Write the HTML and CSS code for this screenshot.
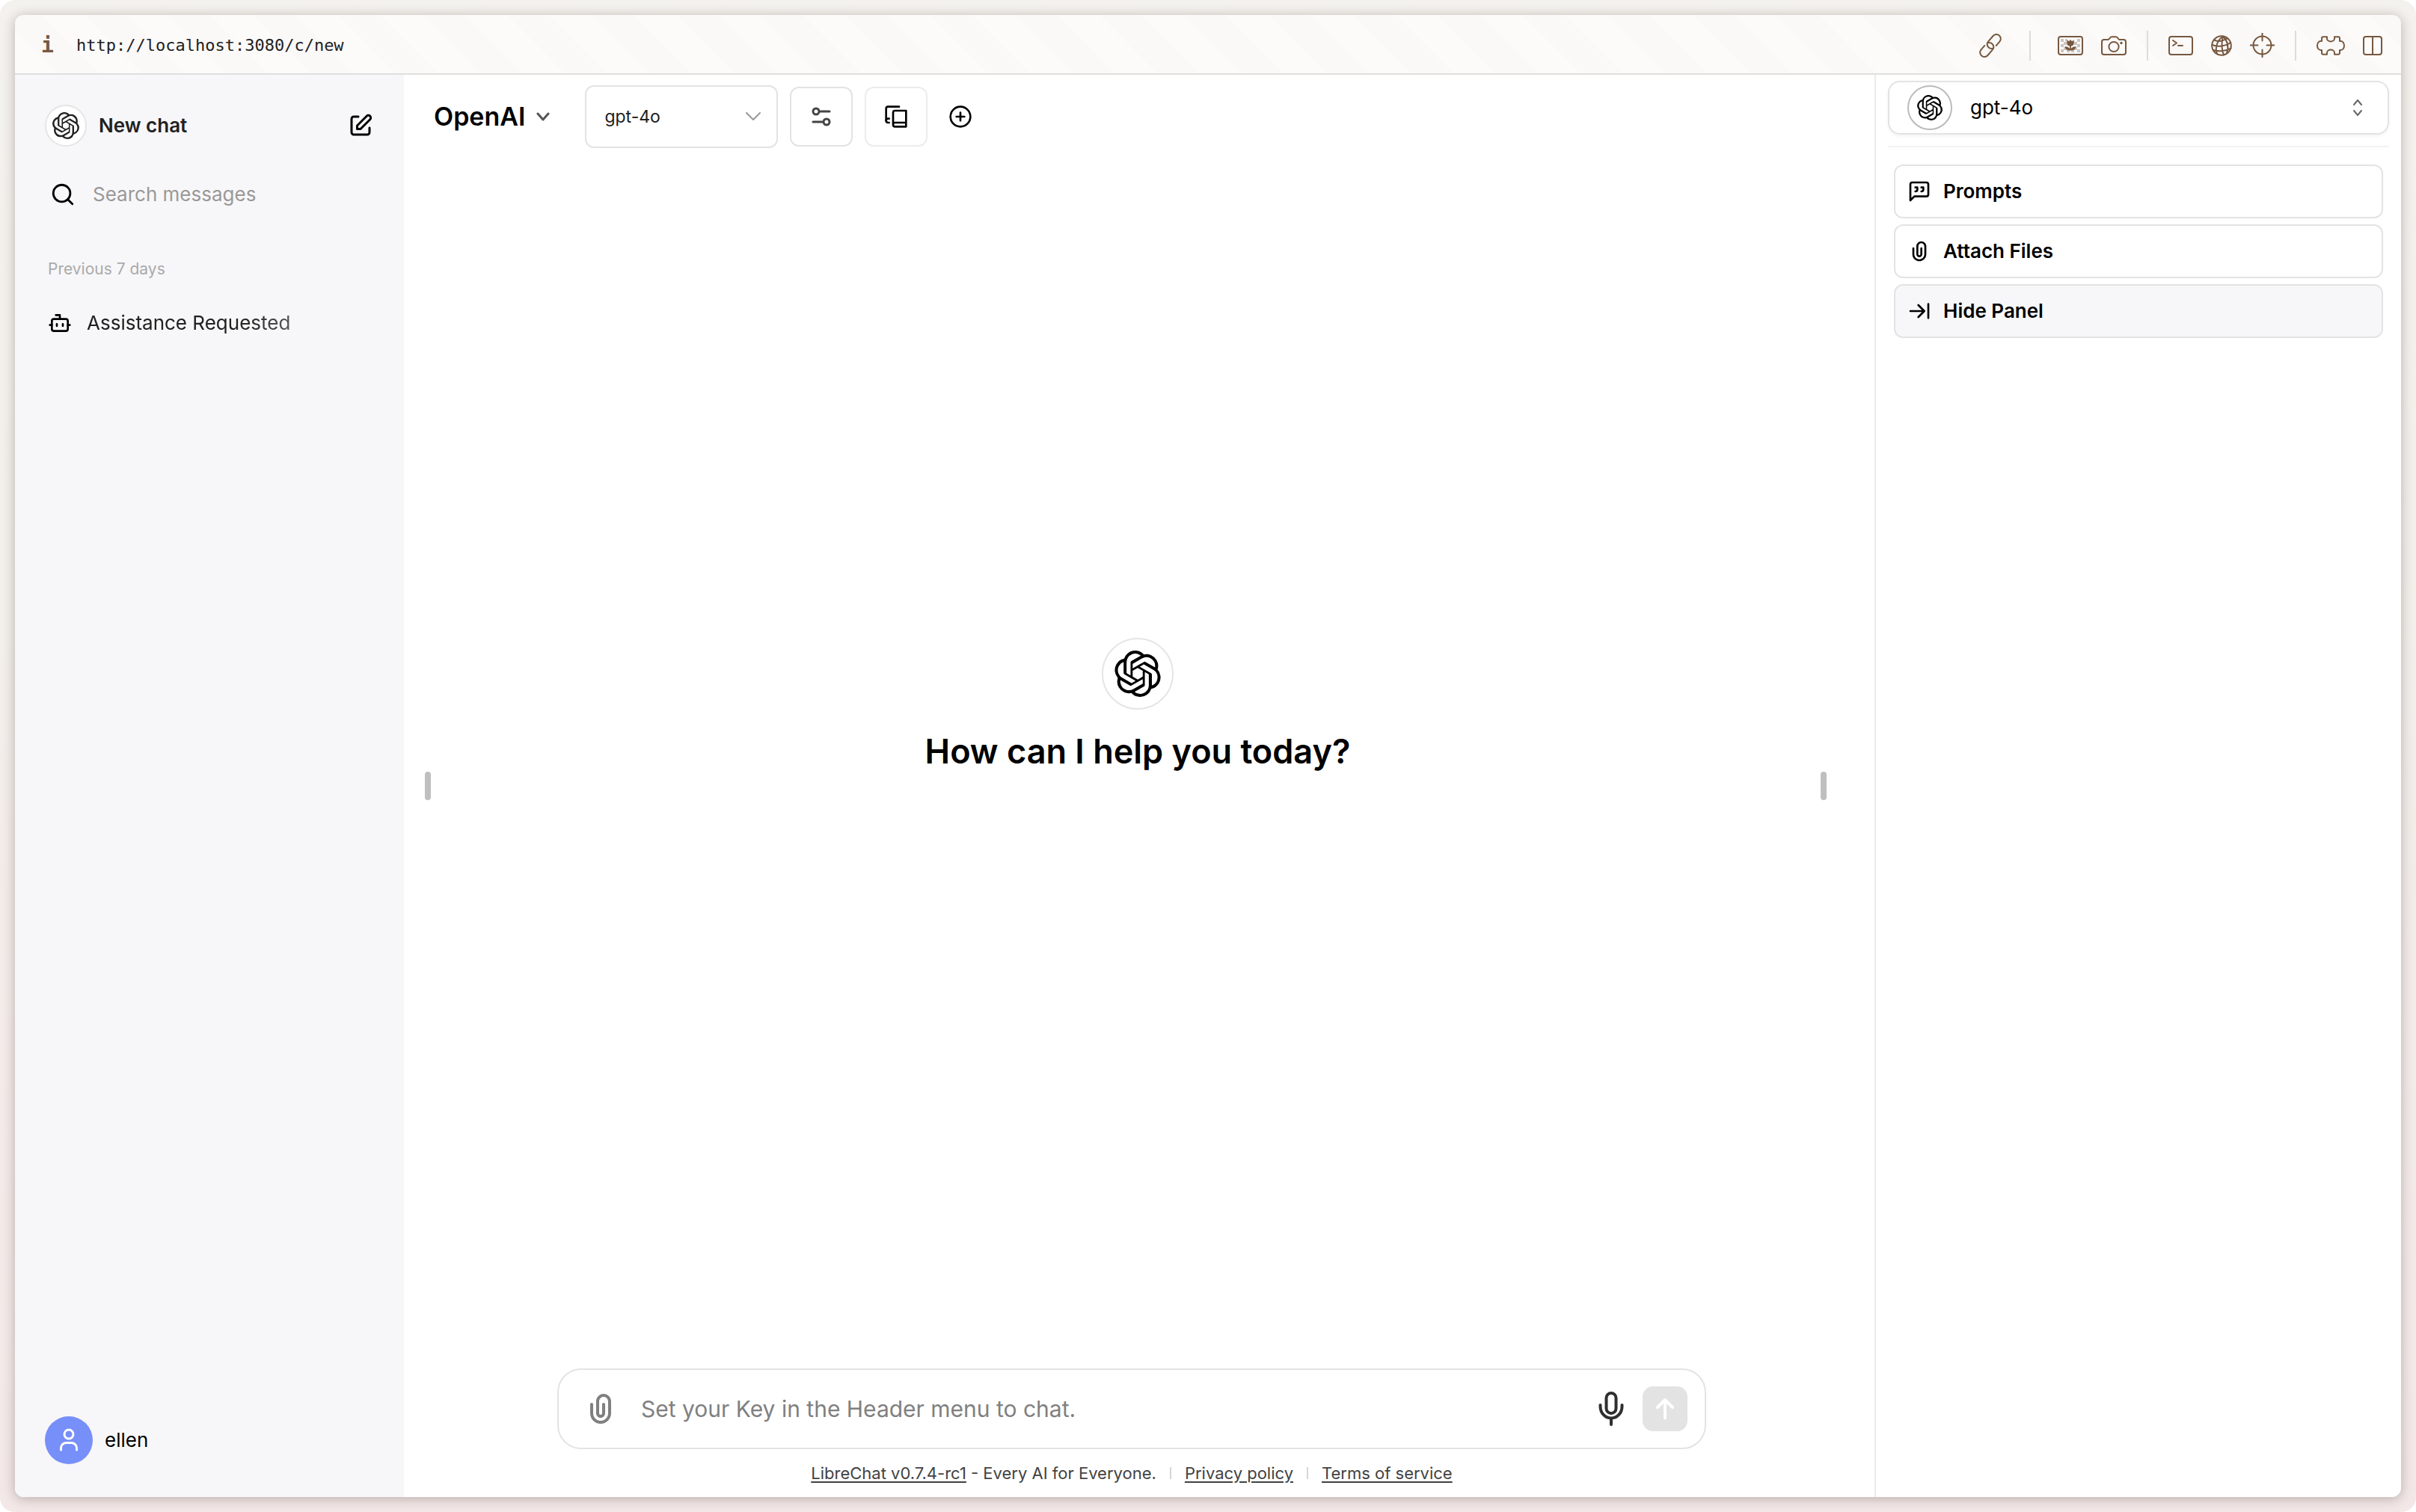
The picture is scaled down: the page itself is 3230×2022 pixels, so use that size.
FILE: index.html
```html
<!DOCTYPE html>
<html lang="en">
<head>
<meta charset="utf-8">
<title>LibreChat</title>
<link rel="stylesheet" href="styles.css">
</head>
<body>
<svg class="defs" width="0" height="0" aria-hidden="true">
  <symbol id="openai" viewBox="0 0 24 24"><path fill="currentColor" d="M22.2819 9.8211a5.9847 5.9847 0 0 0-.5157-4.9108 6.0462 6.0462 0 0 0-6.5098-2.9A6.0651 6.0651 0 0 0 4.9807 4.1818a5.9847 5.9847 0 0 0-3.9977 2.9 6.0462 6.0462 0 0 0 .7427 7.0966 5.98 5.98 0 0 0 .511 4.9107 6.051 6.051 0 0 0 6.5146 2.9001A5.9847 5.9847 0 0 0 13.2599 24a6.0557 6.0557 0 0 0 5.7718-4.2058 5.9894 5.9894 0 0 0 3.9977-2.9001 6.0557 6.0557 0 0 0-.7475-7.073zm-9.022 12.6081a4.4755 4.4755 0 0 1-2.8764-1.0408l.1419-.0804 4.7783-2.7582a.7948.7948 0 0 0 .3927-.6813v-6.7369l2.02 1.1686a.071.071 0 0 1 .038.052v5.5826a4.504 4.504 0 0 1-4.4945 4.4944zm-9.6607-4.1254a4.4708 4.4708 0 0 1-.5346-3.0137l.142.0852 4.783 2.7582a.7712.7712 0 0 0 .7806 0l5.8428-3.3685v2.3324a.0804.0804 0 0 1-.0332.0615L9.74 19.9502a4.4992 4.4992 0 0 1-6.1408-1.6464zM2.3408 7.8956a4.485 4.485 0 0 1 2.3655-1.9728V11.6a.7664.7664 0 0 0 .3879.6765l5.8144 3.3543-2.0201 1.1685a.0757.0757 0 0 1-.071 0l-4.8303-2.7865A4.504 4.504 0 0 1 2.3408 7.872zm16.5963 3.8558L13.1038 8.364 15.1192 7.2a.0757.0757 0 0 1 .071 0l4.8303 2.7913a4.4944 4.4944 0 0 1-.6765 8.1042v-5.6772a.79.79 0 0 0-.407-.667zm2.0107-3.0231l-.142-.0852-4.7735-2.7818a.7759.7759 0 0 0-.7854 0L9.409 9.2297V6.8974a.0662.0662 0 0 1 .0284-.0615l4.8303-2.7866a4.4992 4.4992 0 0 1 6.6802 4.66zM8.3065 12.863l-2.02-1.1638a.0804.0804 0 0 1-.038-.0567V6.0742a4.4992 4.4992 0 0 1 7.3757-3.4537l-.142.0805L8.704 5.459a.7948.7948 0 0 0-.3927.6813zm1.0976-2.3654l2.602-1.4998 2.6069 1.4998v2.9994l-2.5974 1.4997-2.6067-1.4997Z"/></symbol>
  <symbol id="clip" viewBox="0 0 24 24"><path fill="currentColor" fill-rule="evenodd" d="M9 7C9 4.23858 11.2386 2 14 2C16.7614 2 19 4.23858 19 7V15C19 18.866 15.866 22 12 22C8.13401 22 5 18.866 5 15V9C5 8.44772 5.44772 8 6 8C6.55228 8 7 8.44772 7 9V15C7 17.7614 9.23858 20 12 20C14.7614 20 17 17.7614 17 15V7C17 5.34315 15.6569 4 14 4C12.3431 4 11 5.34315 11 7V15C11 15.5523 11.4477 16 12 16C12.5523 16 13 15.5523 13 15V9C13 8.44772 13.4477 8 14 8C14.5523 8 15 8.44772 15 9V15C15 16.6569 13.6569 18 12 18C10.3431 18 9 16.6569 9 15V7Z"/></symbol>
</svg>

<div class="frame">
<div class="window">
  <header class="toolbar">
    <span class="info">i</span>
    <a class="url" href="http://localhost:3080/c/new">http://localhost:3080/c/new</a>
    <div class="tools">
      <button type="button" aria-label="Copy link"><svg class="line" width="32" height="32" viewBox="-16 -16 32 32"><g transform="rotate(-49)"><path d="M5 5.800H12.200A5.800 5.800 0 0 0 12.200-5.800H2.500A5.800 5.800 0 0 0-.5 5"/><path transform="rotate(180)" d="M5 5.800H12.200A5.800 5.800 0 0 0 12.200-5.800H2.500A5.800 5.800 0 0 0-.5 5"/></g></svg></button>
      <span class="rule rule-wide"></span>
      <button type="button" aria-label="Image"><svg class="line" width="34" height="26" viewBox="0 0 34 26"><g class="checks"><path d="M4 4h4v4H4zM8 8h4v4H8zM4 11h4v4H4zM8 15h4v4H8zM4 18h4v4H4zM10 4h3v3h-3zM26 4h4v4h-4zM22 8h4v4h-4zM26 11h4v4h-4zM22 15h4v4h-4zM26 18h4v4h-4zM12 19h4v3h-4zM18 19h4v3h-4z"/></g><rect x="1" y="1" width="32" height="24" rx="3"/><path class="solid" d="M12.3 5.5l2.7 1.8L17 5l2 2.3 2.7-1.8v4.3c0 2.3-1.6 3.8-3.8 4V17c1.300-1.900 3.600-3 6.600-2.800-.6 3.500-3.200 5.300-6.600 5.300h-1.800c-3.400 0-6-1.800-6.600-5.300 3-.2 5.300.9 6.600 2.800v-3.200c-2.200-.2-3.800-1.700-3.800-4z"/></svg></button>
      <button type="button" aria-label="Screenshot"><svg class="line" width="34" height="26" viewBox="0 0 34 26"><path d="M4 5h5.500c1.600 0 2-3.800 4.500-3.800h6C22.500 1.200 22.900 5 24.500 5H30a3 3 0 0 1 3 3v14a3 3 0 0 1-3 3H4a3 3 0 0 1-3-3V8a3 3 0 0 1 3-3z"/><circle cx="17" cy="14.500" r="6.600"/><circle class="solid" cx="27" cy="9.500" r="1.700"/></svg></button>
      <span class="rule"></span>
      <button type="button" aria-label="Console"><svg class="line" width="33" height="26" viewBox="0 0 33 26"><rect x="1" y="1" width="31" height="24" rx="3"/><path d="M6 6l5 3.500L6 13M13 13h6"/></svg></button>
      <button type="button" aria-label="Network"><svg class="line" width="28" height="28" viewBox="0 0 28 28"><circle cx="14" cy="14" r="12.800"/><path d="M16 1.500C8 7 5 17 8 25M16 1.500c-2 8-2.500 17 1 25M16 1.500c6 6 8 14 5 23M4 6.500c5 2.500 13 1.500 18-2.500M1.500 13c7 3 18 2 24.500-3M3 20c7 2 17 1.500 23.500-2.500"/></svg></button>
      <button type="button" aria-label="Inspect element"><svg class="line" width="33" height="33" viewBox="0 0 33 33"><circle cx="16.500" cy="16.500" r="12"/><path d="M16.500 0v10.500M16.500 22.500V33M0 16.500h10.500M22.500 16.500H33"/></svg></button>
      <span class="rule"></span>
      <button type="button" aria-label="Extensions"><svg class="line" width="38" height="26" viewBox="0 0 38 26"><path d="M9 1.200h5v2.300a5 4 0 0 0 10 0V1.200h5a2 2 0 0 1 2 2V7h1.500a4.500 6 0 0 1 0 12H31v3.800a2 2 0 0 1-2 2h-5v-2.300a5 4 0 0 0-10 0v2.300H9a2 2 0 0 1-2-2V19H5.500a4.500 6 0 0 1 0-12H7V3.200a2 2 0 0 1 2-2z"/></svg></button>
      <button type="button" aria-label="Split view"><svg class="line" width="26" height="26" viewBox="0 0 26 26"><rect x="1" y="1" width="24" height="24" rx="3"/><path d="M13 1v24"/></svg></button>
    </div>
  </header>

  <div class="app">
    <nav class="sidebar">
      <div class="newchat">
        <a href="#"><span class="ring"><svg width="36" height="36"><use href="#openai"/></svg></span>New chat</a>
        <button type="button" aria-label="New chat"><svg width="36" height="36" viewBox="0 0 24 24"><path fill="currentColor" fill-rule="evenodd" d="M16.7929 2.79289C18.0118 1.57394 19.9882 1.57394 21.2071 2.79289C22.4261 4.01184 22.4261 5.98815 21.2071 7.20711L12.7071 15.7071C12.5196 15.8946 12.2652 16 12 16H9C8.44772 16 8 15.5523 8 15V12C8 11.7348 8.10536 11.4804 8.29289 11.2929L16.7929 2.79289ZM19.7929 4.20711C19.355 3.7692 18.645 3.7692 18.2071 4.2071L10 12.4142V14H11.5858L19.7929 5.79289C20.2308 5.35499 20.2308 4.64501 19.7929 4.20711ZM6 5C5.44772 5 5 5.44771 5 6V18C5 18.5523 5.44772 19 6 19H18C18.5523 19 19 18.5523 19 18V14C19 13.4477 19.4477 13 20 13C20.5523 13 21 13.4477 21 14V18C21 19.6569 19.6569 21 18 21H6C4.34315 21 3 19.6569 3 18V6C3 4.34314 4.34315 3 6 3H10C10.5523 3 11 3.44771 11 4C11 4.55228 10.5523 5 10 5H6Z"/></svg></button>
      </div>
      <label class="search">
        <svg class="stroke" width="34" height="34" viewBox="0 0 24 24"><circle cx="11" cy="11" r="8"/><path d="m21 21-4.300-4.300"/></svg>
        <input type="text" placeholder="Search messages" aria-label="Search messages">
      </label>
      <h2 class="group">Previous 7 days</h2>
      <a class="chat" href="#">
        <svg class="stroke" width="32" height="32" viewBox="0 0 24 24"><path d="M12 8V4H8"/><rect width="16" height="12" x="4" y="8" rx="2"/><path d="M2 14h2M20 14h2M15 13v2M9 13v2"/></svg>
        <span>Assistance Requested</span>
      </a>
      <button class="user" type="button">
        <span class="avatar"><svg width="32" height="32" viewBox="0 0 32 32" fill="none" stroke="currentColor" stroke-width="3" stroke-linecap="round"><circle cx="16" cy="8" r="6"/><path d="M5.500 29v-2.500a7 7 0 0 1 7-7h7a7 7 0 0 1 7 7V29"/></svg></span>ellen
      </button>
    </nav>

    <main class="main">
      <div class="handle handle-left"></div>
      <div class="handle handle-right"></div>
      <div class="bar">
        <button class="endpoint" type="button">OpenAI<svg width="20" height="12" viewBox="0 0 20 12" fill="none" stroke="#555" stroke-width="3" stroke-linecap="round" stroke-linejoin="round"><path d="M3 2l7 8 7-8"/></svg></button>
        <div class="model">
          <select aria-label="Model"><option>gpt-4o</option></select>
          <svg width="22" height="12" viewBox="0 0 22 12" fill="none" stroke="#999" stroke-width="2" stroke-linecap="round" stroke-linejoin="round"><path d="M2 1l9 9 9-9"/></svg>
        </div>
        <button class="square" type="button" aria-label="Parameters"><svg width="26" height="26" viewBox="0 0 26 26" fill="none" stroke="#444" stroke-width="3" stroke-linecap="round"><circle cx="6" cy="6" r="4"/><path d="M12 6h12"/><circle cx="20" cy="20" r="4"/><path d="M2 20h12"/></svg></button>
        <button class="square pale" type="button" aria-label="Presets"><svg class="stroke" width="32" height="32" viewBox="0 0 24 24"><path d="M2 16V4a2 2 0 0 1 2-2h11"/><path d="M5 14H4a2 2 0 1 0 0 4h1"/><path d="M22 18H11a2 2 0 1 0 0 4h11V6H11a2 2 0 0 0-2 2v12"/></svg></button>
        <button class="add" type="button" aria-label="Add conversation"><svg class="stroke" width="32" height="32" viewBox="0 0 24 24"><circle cx="12" cy="12" r="10"/><path d="M8 12h8M12 8v8"/></svg></button>
      </div>
      <section class="landing">
        <span class="ring ring-large"><svg width="62" height="62"><use href="#openai"/></svg></span>
        <h1>How can I help you today?</h1>
      </section>
      <div class="bottom">
        <form class="composer">
          <button class="attach" type="button" aria-label="Attach files"><svg width="48" height="48"><use href="#clip"/></svg></button>
          <input type="text" placeholder="Set your Key in the Header menu to chat." aria-label="Message">
          <button class="mic" type="button" aria-label="Use microphone"><svg width="34" height="46" viewBox="0 0 34 46" fill="none" stroke="currentColor" stroke-width="4" stroke-linecap="round"><rect x="10.500" y="2" width="13" height="27" rx="6.500"/><path d="M2.500 18v2a14.500 15.500 0 0 0 29 0v-2M17 36v8"/></svg></button>
          <button class="send" type="submit" aria-label="Send message"><svg width="26" height="30" viewBox="0 0 26 30" fill="none" stroke="currentColor" stroke-width="4" stroke-linecap="round" stroke-linejoin="round"><path d="M13 27.500V3M3 13 13 3l10 10"/></svg></button>
        </form>
        <footer class="legal">
          <span><a href="#">LibreChat v0.7.4-rc1</a> - Every AI for Everyone.</span>
          <i></i><a href="#">Privacy policy</a><i></i><a href="#">Terms of service</a>
        </footer>
      </div>
    </main>

    <aside class="panel">
      <div class="picker">
        <span class="ring ring-dark"><svg width="34" height="34"><use href="#openai"/></svg></span>
        <select aria-label="Panel model"><option>gpt-4o</option></select>
        <svg class="updown" width="14" height="30" viewBox="0 0 14 30" fill="none" stroke="#666" stroke-width="2" stroke-linecap="round" stroke-linejoin="round"><path d="M2 11l5-6 5 6M2 19l5 6 5-6"/></svg>
      </div>
      <div class="actions">
        <button type="button"><svg class="stroke" width="32" height="32" viewBox="0 0 24 24"><path d="M21 15a2 2 0 0 1-2 2H7l-4 4V5a2 2 0 0 1 2-2h14a2 2 0 0 1 2 2z"/><path d="M8 12a2 2 0 0 0 2-2V8H8M14 12a2 2 0 0 0 2-2V8h-2"/></svg>Prompts</button>
        <button type="button"><svg width="32" height="32"><use href="#clip"/></svg>Attach Files</button>
        <button class="active" type="button"><svg class="stroke" width="32" height="32" viewBox="0 0 24 24"><path d="M17 12H3M11 18l6-6-6-6M21 5v14"/></svg>Hide Panel</button>
      </div>
    </aside>
  </div>
</div>
</div>
</body>
</html>
```
FILE: styles.css
```css
*, *::before, *::after { box-sizing: border-box; }
body { margin: 0; background: #fff; color: #000; font: 26px/32px Inter, sans-serif; }
button, input, select { font: inherit; color: inherit; background: none; border: 0; margin: 0; padding: 0; outline: 0; }
button { display: flex; align-items: center; }
select { appearance: none; }
a { color: inherit; text-decoration: none; }
svg { display: block; flex: none; }
.defs { position: absolute; }
.stroke { fill: none; stroke: currentColor; stroke-width: 2; stroke-linecap: round; stroke-linejoin: round; }

.frame { display: flex; min-height: 100vh; padding: 20px; border-radius: 20px; background: linear-gradient(#f4f2ee, #f3efeb 40%, #f3e8e7); }
.window { flex: 1; min-width: 0; display: flex; flex-direction: column; border-radius: 12px; overflow: hidden; background: #fff; box-shadow: 0 2px 16px rgba(60, 40, 40, .32); }

/* browser toolbar */
.toolbar { display: flex; align-items: center; height: 80px; padding: 3px 25px 0 35px; border-bottom: 2px solid #e0dfde; background: repeating-linear-gradient(45deg, #fcfbfa 0 40px, #faf9f8 40px 80px); }
.info { width: 47px; color: #77583f; font: bold 28px/32px "DejaVu Sans Mono", monospace; }
.url { color: #222; font: 22px/32px "DejaVu Sans Mono", monospace; }
.tools { display: flex; align-items: center; gap: 24px; margin-left: auto; }
.line { fill: none; stroke: #77583f; stroke-width: 2; stroke-linecap: round; stroke-linejoin: round; }
.line .solid { fill: #77583f; stroke: none; }
.checks { fill: #cbc6c2; stroke: none; }
.rule { width: 2px; height: 40px; margin: 0 3px; background: #dedcda; }
.rule-wide { margin: 0 12px; }

.app { flex: 1; display: flex; min-height: 0; }

.ring { display: grid; place-items: center; flex: none; width: 56px; height: 56px; border: 2px solid #e5e5e5; border-radius: 50%; background: #fff; }
.ring-large { width: 96px; height: 96px; }
.ring-dark { width: 60px; height: 60px; border-color: #bbb; }

/* conversations */
.sidebar { flex: none; width: 520px; padding: 36px 40px 44px; display: flex; flex-direction: column; background: #f7f7f9; }
.newchat { display: flex; align-items: center; justify-content: space-between; height: 64px; color: #212121; font-weight: 600; }
.newchat a { display: flex; align-items: center; gap: 16px; }
.newchat button { color: #000; }
.search { display: flex; align-items: center; gap: 20px; height: 64px; margin-top: 28px; padding-left: 7px; }
.search input { flex: 1; min-width: 0; padding-left: 3px; }
.search input::placeholder { color: #9a9898; opacity: 1; }
.group { margin: 54px 0 0 4px; color: #aaa; font-size: 21px; line-height: 28px; font-weight: 400; }
.chat { display: flex; align-items: center; gap: 20px; height: 64px; margin-top: 26px; padding-left: 4px; }
.chat span { color: #212121; mask-image: linear-gradient(to right, #000 75%, rgba(0, 0, 0, .75)); }
.user { gap: 16px; margin-top: auto; }
.avatar { display: grid; place-items: center; width: 64px; height: 64px; border-radius: 50%; background: #778ff9; color: #fff; }

/* conversation */
.main { position: relative; flex: 1; min-width: 0; display: flex; flex-direction: column; }
.handle { position: absolute; top: 50%; width: 8px; height: 38px; margin-top: -19px; border-radius: 4px; background: #bfbfbf; }
.handle-left { left: 28px; }
.handle-right { right: 64px; }
.bar { display: flex; align-items: center; height: 98px; padding: 14px 0 0 40px; }
.endpoint { gap: 14px; margin-right: 46px; font-size: 34px; line-height: 40px; font-weight: 600; }
.model { position: relative; width: 258px; height: 84px; margin-right: 16px; }
.model select { width: 100%; height: 100%; padding: 0 60px 0 24px; border: 2px solid #e3e3e3; border-radius: 12px; background: #fff; color: #212121; font-size: 23px; }
.model svg { position: absolute; top: 36px; right: 22px; pointer-events: none; }
.square { justify-content: center; width: 84px; height: 80px; margin-right: 16px; border: 2px solid #e3e3e3; border-radius: 12px; }
.square.pale { border-color: #ececec; }
.add { margin-left: 12px; }
.landing { flex: 1; display: flex; flex-direction: column; align-items: center; justify-content: center; gap: 28px; padding: 0 4px 142px 0; }
.landing h1 { margin: 0; font-size: 45px; line-height: 56px; font-weight: 600; }
.bottom { display: flex; flex-direction: column; align-items: center; padding-right: 20px; }
.composer { display: flex; align-items: center; width: 100%; max-width: 1536px; height: 108px; padding: 0 23px 0 32px; border: 2px solid #e3e3e3; border-radius: 32px; }
.composer input { flex: 1; min-width: 0; height: 60px; margin-left: 30px; font-size: 30px; }
.composer input::placeholder { color: #808080; opacity: 1; }
.attach { color: #808080; }
.mic { margin-right: 25px; color: #2f2f2f; }
.send { justify-content: center; width: 60px; height: 60px; border-radius: 14px; background: #e3e3e3; color: #fff; }
.legal { display: flex; align-items: center; gap: 18px; height: 64px; color: #424242; font-size: 22px; line-height: 32px; }
.legal a { text-decoration: underline; text-underline-offset: 3px; }
.legal i { width: 2px; height: 16px; background: #d6d6d6; }

/* side panel */
.panel { flex: none; width: 704px; padding: 8px 16px; border-left: 2px solid #ebebeb; }
.picker { position: relative; display: flex; align-items: center; height: 72px; padding-left: 24px; border: 2px solid #e3e3e3; border-radius: 16px; box-shadow: 0 2px 4px rgba(0, 0, 0, .05); }
.picker .ring { margin-right: -60px; }
.picker select { flex: 1; height: 68px; padding-left: 84px; }
.updown { position: absolute; top: 19px; right: 33px; pointer-events: none; }
.actions { display: flex; flex-direction: column; gap: 8px; margin-top: 15px; padding: 23px 8px 0; border-top: 2px solid #f3f3f3; }
.actions button { height: 72px; gap: 16px; padding-left: 16px; border: 2px solid #e3e3e3; border-radius: 12px; font-weight: 600; }
.actions .active { background: #f7f7f9; }
```
